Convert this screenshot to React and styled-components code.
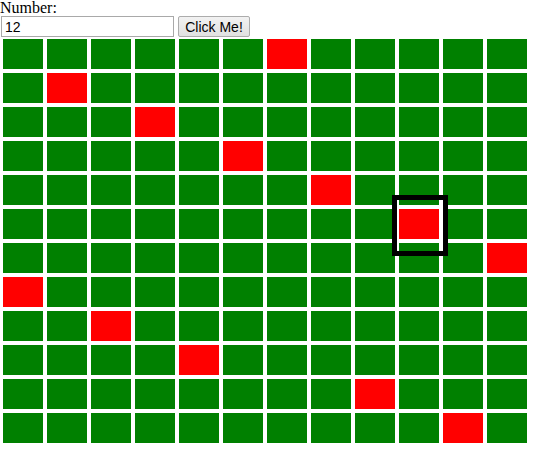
import React, {useState} from 'react'
import styled, {createGlobalStyle} from 'styled-components'

const GlobalStyle = createGlobalStyle`
    body {
        margin: 0;
        background: #fff;
        font-family: "Liberation Serif", "Times New Roman", serif;
    }
`

const Page = styled.div`
    width: 539px;
`

const Label = styled.div`
    font-size: 16px;
    line-height: 16px;
    height: 16px;
    color: #000;
`

const Controls = styled.div`
    display: flex;
    align-items: flex-start;
    gap: 4px;
    padding-left: 1px;
    height: 21px;
`

const NumberInput = styled.input`
    box-sizing: border-box;
    width: 173px;
    height: 21px;
    margin: 0;
    padding: 1px 3px 0;
    border: 1px solid #a9a9a9;
    font-family: "Liberation Sans", Arial, sans-serif;
    font-size: 14px;
    color: #000;
    outline: none;
`

const Button = styled.button`
    box-sizing: border-box;
    width: 72px;
    height: 21px;
    margin: 0;
    padding: 0;
    border: 1px solid #acacac;
    border-radius: 2px;
    background: linear-gradient(#f2f2f2, #e1e1e1);
    font-family: "Liberation Sans", Arial, sans-serif;
    font-size: 14px;
    color: #000;
    cursor: pointer;
`

const Board = styled.div`
    position: relative;
    display: grid;
    grid-template-columns: repeat(12, 40px);
    grid-auto-rows: 30px;
    gap: 4px;
    padding: 2px 0 0 3px;
`

const Cell = styled.div`
    background: ${props => props.hit ? '#ff0000' : '#008000'};
`

const Marker = styled.div`
    position: absolute;
    box-sizing: border-box;
    left: 392px;
    top: 158px;
    width: 56px;
    height: 61px;
    border: 5px solid #000;
    pointer-events: none;
`

// red cell column for each row
const hits = [6, 1, 3, 5, 7, 9, 11, 0, 2, 4, 8, 10]

export default function App() {
    const [value, setValue] = useState('12')

    return (
        <Page>
            <GlobalStyle />
            <Label>Number:</Label>
            <Controls>
                <NumberInput value={value} onChange={e => setValue(e.target.value)} />
                <Button>Click Me!</Button>
            </Controls>
            <Board>
                {hits.map((col, r) =>
                    Array.from({length: 12}, (_, c) => (
                        <Cell key={`${r}-${c}`} hit={c === col} />
                    ))
                )}
                <Marker />
            </Board>
        </Page>
    )
}
